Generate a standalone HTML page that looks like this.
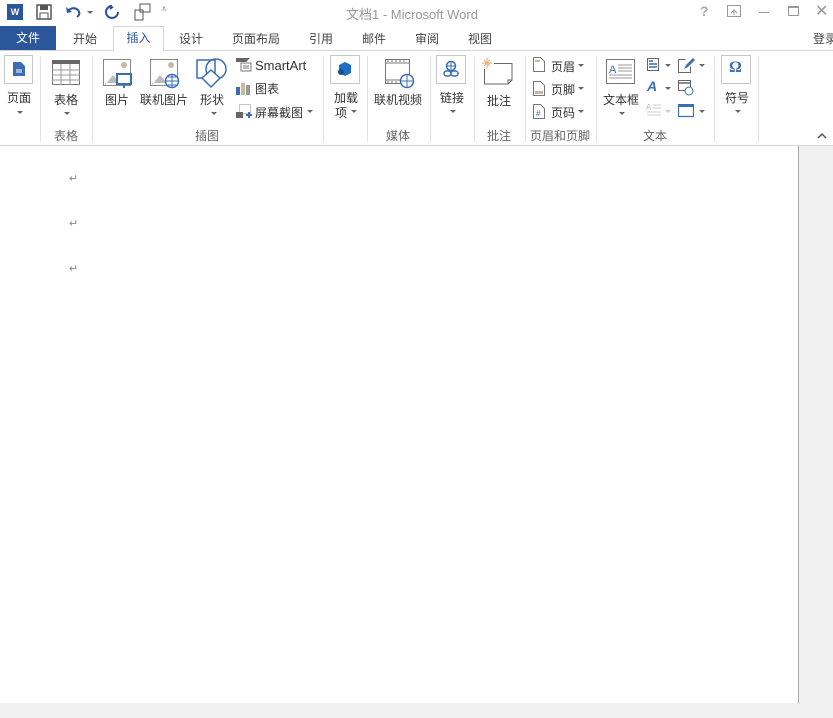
<!DOCTYPE html>
<html><head><meta charset="utf-8"><style>
*{margin:0;padding:0;box-sizing:border-box}
body{width:833px;height:718px;overflow:hidden;background:#fff;font-family:"Liberation Sans","Noto Sans CJK SC",sans-serif;font-size:12px;color:#444;position:relative}
.a{position:absolute;white-space:nowrap}
.tab{position:absolute;top:30px;font-size:12px;color:#444;white-space:nowrap}
.sep{position:absolute;top:56px;width:1px;height:86px;background:#e1e1e1}
.grp{position:absolute;top:127px;font-size:12px;color:#666;white-space:nowrap}
.lbl{position:absolute;font-size:12px;color:#333;white-space:nowrap}
.dd{position:absolute;width:0;height:0;border-left:3px solid transparent;border-right:3px solid transparent;border-top:3px solid #666}
.box{position:absolute;border:1px solid #c6c6c6;background:#fff}
.pm{position:absolute;font-size:11px;color:#888}
</style></head><body>
<div class="a" style="left:7px;top:4px;width:16px;height:16px;background:#2b579a;color:#fff;font-size:9px;font-weight:bold;line-height:16px;text-align:center">W</div>
<svg class="a" style="left:36px;top:4px" width="16" height="16"><rect x="1" y="1" width="14" height="14" fill="none" stroke="#555" stroke-width="1.5"/><rect x="4" y="1" width="8" height="5" fill="#555"/><rect x="4" y="9" width="8" height="6" fill="none" stroke="#555"/></svg>
<svg class="a" style="left:64px;top:4px" width="30" height="16"><path d="M4 7 Q9 2 14 6 Q17 10 13 13" fill="none" stroke="#2b579a" stroke-width="2"/><path d="M2 3 L3 9 L8 8Z" fill="#2b579a"/><path d="M23 7l3 3 3-3z" fill="#666"/></svg>
<svg class="a" style="left:104px;top:4px" width="16" height="16"><path d="M8 2 A6 6 0 1 0 14 8" fill="none" stroke="#2b579a" stroke-width="2"/><path d="M5 1 L10 3 L6 6Z" fill="#2b579a"/></svg>
<svg class="a" style="left:133px;top:3px" width="20" height="18"><rect x="7" y="1" width="10" height="8" fill="none" stroke="#555"/><rect x="2" y="7" width="8" height="10" fill="none" stroke="#555"/></svg>
<div class="a" style="left:161px;top:4px;color:#666;font-size:10px">⩡</div>
<div class="a" style="left:346px;top:4px;color:#999;font-size:13px">文档1 - Microsoft Word</div>
<div class="a" style="left:700px;top:3px;color:#aaa;font-size:14px;font-weight:bold">?</div>
<svg class="a" style="left:727px;top:5px" width="14" height="12"><rect x="0.5" y="0.5" width="13" height="11" fill="none" stroke="#999"/><path d="M4 8l3-3 3 3M7 5v5" stroke="#999" fill="none"/></svg>
<div class="a" style="left:759px;top:12px;width:10px;height:1px;background:#999"></div>
<div class="a" style="left:788px;top:6px;width:11px;height:10px;border:1px solid #999;border-top-width:2px"></div>
<div class="a" style="left:815px;top:1px;color:#999;font-size:16px">✕</div>
<div class="a" style="left:0;top:26px;width:56px;height:24px;background:#2b579a;color:#fff;text-align:center;line-height:24px">文件</div>
<div class="tab" style="left:73px">开始</div>
<div class="a" style="left:113px;top:26px;width:51px;height:25px;border:1px solid #d5d5d5;border-bottom:none;background:#fff;color:#2b579a;text-align:center;line-height:23px">插入</div>
<div class="tab" style="left:179px">设计</div>
<div class="tab" style="left:232px">页面布局</div>
<div class="tab" style="left:309px">引用</div>
<div class="tab" style="left:362px">邮件</div>
<div class="tab" style="left:415px">审阅</div>
<div class="tab" style="left:468px">视图</div>
<div class="tab" style="left:813px">登录</div>
<div class="a" style="left:0;top:50px;width:113px;height:1px;background:#d5d5d5"></div>
<div class="a" style="left:164px;top:50px;width:669px;height:1px;background:#d5d5d5"></div>
<div class="box" style="left:4px;top:55px;width:29px;height:29px"></div>
<svg class="a" style="left:12px;top:61px" width="14" height="16"><path d="M1 1h8l4 4v10H1z" fill="#3a6fb4"/><path d="M4 9h6M4 11h6" stroke="#fff"/></svg>
<div class="lbl" style="left:7px;top:89px">页面</div><div class="dd" style="left:17px;top:111px"></div>
<div class="sep" style="left:40px"></div>
<svg class="a" style="left:52px;top:60px" width="28" height="26"><rect x="0.5" y="0.5" width="27" height="24" fill="#fff" stroke="#777"/><rect x="0" y="0" width="28" height="4" fill="#666"/><path d="M0 10h28M0 15h28M0 20h28M9 4v21M18 4v21" stroke="#999"/></svg>
<div class="lbl" style="left:54px;top:91px">表格</div><div class="dd" style="left:64px;top:112px"></div>
<div class="grp" style="left:54px">表格</div>
<div class="sep" style="left:92px"></div>
<svg class="a" style="left:103px;top:59px" width="30" height="30"><rect x="0.5" y="0.5" width="27" height="26" fill="#fff" stroke="#888"/><circle cx="21" cy="6" r="3" fill="#c9b89e"/><path d="M2 26l8-10 7 8H2z" fill="#bbb"/><rect x="14" y="15" width="14" height="10" fill="#fff" stroke="#3a6fb4" stroke-width="2"/><path d="M21 25v4" stroke="#3a6fb4" stroke-width="2"/></svg>
<div class="lbl" style="left:105px;top:91px">图片</div>
<svg class="a" style="left:150px;top:59px" width="30" height="30"><rect x="0.5" y="0.5" width="27" height="26" fill="#fff" stroke="#888"/><circle cx="21" cy="6" r="3" fill="#c9b89e"/><path d="M2 26l8-10 7 8H2z" fill="#bbb"/><circle cx="22" cy="22" r="6.5" fill="#fff" stroke="#3a6fb4" stroke-width="1.5"/><path d="M15.5 22h13M22 15.5v13M18 18h8M18 26h8" stroke="#3a6fb4"/></svg>
<div class="lbl" style="left:140px;top:91px">联机图片</div>
<svg class="a" style="left:196px;top:57px" width="32" height="32"><rect x="1" y="3" width="18" height="18" fill="none" stroke="#3a6fb4" stroke-width="1.5"/><circle cx="20" cy="12" r="10" fill="none" stroke="#3a6fb4" stroke-width="1.5"/><path d="M15 13l9 8-9 9-9-9z" fill="#fff" stroke="#3a6fb4" stroke-width="1.5"/></svg>
<div class="lbl" style="left:200px;top:91px">形状</div><div class="dd" style="left:211px;top:112px"></div>
<svg class="a" style="left:236px;top:58px" width="16" height="14"><path d="M0 0h14l-4 4H0z" fill="#666"/><rect x="5" y="5" width="10" height="8" fill="#fff" stroke="#777"/><path d="M7 8h6M7 10h6" stroke="#777"/></svg>
<div class="lbl" style="left:255px;top:58px;font-size:13px">SmartArt</div>
<svg class="a" style="left:236px;top:81px" width="16" height="14"><rect x="0" y="6" width="4" height="8" fill="#3a6fb4"/><rect x="5" y="2" width="4" height="12" fill="#c9b89e"/><rect x="10" y="4" width="4" height="10" fill="#999"/></svg>
<div class="lbl" style="left:255px;top:80px">图表</div>
<svg class="a" style="left:236px;top:103px" width="16" height="16"><rect x="3.5" y="1.5" width="11" height="9" fill="none" stroke="#888" stroke-dasharray="1 1"/><rect x="0" y="9" width="7" height="6" fill="#666"/><path d="M10 12h6M13 9v6" stroke="#3a6fb4" stroke-width="2"/></svg>
<div class="lbl" style="left:255px;top:104px">屏幕截图</div><div class="dd" style="left:307px;top:110px"></div>
<div class="grp" style="left:195px">插图</div>
<div class="sep" style="left:323px"></div>
<div class="box" style="left:330px;top:55px;width:30px;height:29px"></div>
<svg class="a" style="left:337px;top:61px" width="16" height="16"><path d="M8 1l6 3v8l-6 3-6-3V4z" fill="#1f6fc6"/><circle cx="4" cy="11" r="3" fill="#1f4e8c"/></svg>
<div class="lbl" style="left:334px;top:89px">加载</div>
<div class="lbl" style="left:335px;top:104px">项</div><div class="dd" style="left:351px;top:110px"></div>
<div class="sep" style="left:367px"></div>
<svg class="a" style="left:385px;top:59px" width="30" height="30"><rect x="0.5" y="0.5" width="24" height="24" fill="#fff" stroke="#777"/><path d="M0 4h25M0 21h25" stroke="#777"/><path d="M2 2h2M6 2h2M10 2h2M14 2h2M18 2h2M2 23h2M6 23h2M10 23h2" stroke="#777"/><circle cx="22" cy="22" r="6.5" fill="#fff" stroke="#3a6fb4" stroke-width="1.5"/><path d="M15.5 22h13M22 15.5v13" stroke="#3a6fb4"/></svg>
<div class="lbl" style="left:374px;top:91px">联机视频</div>
<div class="grp" style="left:386px">媒体</div>
<div class="sep" style="left:430px"></div>
<div class="box" style="left:436px;top:55px;width:30px;height:29px"></div>
<svg class="a" style="left:443px;top:60px" width="16" height="18"><circle cx="8" cy="6" r="4.5" fill="none" stroke="#3a6fb4" stroke-width="1.5"/><path d="M3.5 6h9M8 1.5v9" stroke="#3a6fb4"/><rect x="1" y="11" width="7" height="5" rx="2.5" fill="none" stroke="#3a6fb4" stroke-width="1.5"/><rect x="8" y="11" width="7" height="5" rx="2.5" fill="none" stroke="#3a6fb4" stroke-width="1.5"/></svg>
<div class="lbl" style="left:440px;top:89px">链接</div><div class="dd" style="left:450px;top:110px"></div>
<div class="sep" style="left:474px"></div>
<svg class="a" style="left:482px;top:57px" width="32" height="28"><path d="M2 3l6 6M8 3l-6 6M5 1v10M0 6h10" stroke="#e4b87a" stroke-width="1.2"/><path d="M12 6.5H30V23l-4 4H2.5V12" fill="none" stroke="#666"/><path d="M26 27v-4h4" fill="none" stroke="#666"/></svg>
<div class="lbl" style="left:487px;top:92px">批注</div>
<div class="grp" style="left:487px">批注</div>
<div class="sep" style="left:525px"></div>
<svg class="a" style="left:533px;top:57px" width="12" height="15"><path d="M.5.5h7l4 4v10H.5z" fill="#fff" stroke="#777"/><rect x="2" y="3" width="5" height="2" fill="#c9b89e"/></svg>
<div class="lbl" style="left:551px;top:58px">页眉</div><div class="dd" style="left:578px;top:64px"></div>
<svg class="a" style="left:533px;top:81px" width="12" height="15"><path d="M.5.5h7l4 4v10H.5z" fill="#fff" stroke="#777"/><rect x="2" y="10" width="8" height="3" fill="#c9b89e"/></svg>
<div class="lbl" style="left:551px;top:81px">页脚</div><div class="dd" style="left:578px;top:87px"></div>
<svg class="a" style="left:533px;top:104px" width="12" height="15"><path d="M.5.5h7l4 4v10H.5z" fill="#fff" stroke="#777"/><text x="3" y="12" font-size="8" fill="#3a6fb4" font-family="Liberation Sans">#</text></svg>
<div class="lbl" style="left:551px;top:104px">页码</div><div class="dd" style="left:578px;top:110px"></div>
<div class="grp" style="left:530px">页眉和页脚</div>
<div class="sep" style="left:596px"></div>
<svg class="a" style="left:606px;top:59px" width="30" height="26"><rect x="0.5" y="0.5" width="28" height="24" fill="#fff" stroke="#777"/><text x="3" y="14" font-size="11" fill="#3a6fb4" font-family="Liberation Sans">A</text><path d="M12 6h14M12 9h14M12 12h14M3 16h23M3 19h23" stroke="#999"/></svg>
<div class="lbl" style="left:603px;top:91px">文本框</div><div class="dd" style="left:619px;top:112px"></div>
<svg class="a" style="left:647px;top:58px" width="12" height="13"><rect x=".5" y=".5" width="11" height="12" fill="#fff" stroke="#666"/><path d="M2 3h4M2 6h8M2 9h8" stroke="#3a6fb4" stroke-width="1.5"/></svg><div class="dd" style="left:665px;top:64px"></div>
<div class="a" style="left:647px;top:78px;color:#3a6fb4;font-size:14px;font-weight:bold;font-style:italic">A</div><div class="dd" style="left:665px;top:87px"></div>
<svg class="a" style="left:646px;top:102px" width="16" height="16"><text x="0" y="8" font-size="8" fill="#bbb" font-family="Liberation Sans">A</text><path d="M7 3h8M7 6h8M1 10h14M1 13h14" stroke="#ccc"/></svg><div class="dd" style="left:665px;top:110px;border-top-color:#ccc"></div>
<svg class="a" style="left:678px;top:57px" width="18" height="16"><path d="M.5 2.5h7M.5 2.5v13h12v-6" fill="none" stroke="#666"/><path d="M6 12l2-4 7-7 2 2-7 7z" fill="#3a6fb4"/></svg><div class="dd" style="left:699px;top:64px"></div>
<svg class="a" style="left:678px;top:80px" width="16" height="16"><rect x=".5" y=".5" width="12" height="10" fill="none" stroke="#666"/><path d="M0 3h13" stroke="#666" stroke-width="1.5"/><circle cx="11" cy="11" r="4" fill="#fff" stroke="#3a6fb4"/></svg>
<svg class="a" style="left:678px;top:104px" width="16" height="14"><rect x=".5" y=".5" width="15" height="12" fill="#fff" stroke="#3a6fb4" stroke-width="1.2"/><rect x="0" y="0" width="16" height="3" fill="#3a6fb4"/></svg><div class="dd" style="left:699px;top:110px"></div>
<div class="grp" style="left:643px">文本</div>
<div class="sep" style="left:714px"></div>
<div class="box" style="left:721px;top:55px;width:30px;height:29px"></div>
<div class="a" style="left:729px;top:59px;color:#3a6fb4;font-size:16px;font-weight:bold;font-family:'Liberation Serif',serif">Ω</div>
<div class="lbl" style="left:725px;top:89px">符号</div><div class="dd" style="left:735px;top:110px"></div>
<div class="sep" style="left:758px"></div>
<svg class="a" style="left:817px;top:132px" width="10" height="8"><path d="M1 6l4-4 4 4" fill="none" stroke="#555" stroke-width="1.5"/></svg>
<div class="a" style="left:0;top:145px;width:833px;height:1px;background:#d5d5d5"></div>
<div class="a" style="left:798px;top:146px;width:1px;height:557px;background:#aaa"></div>
<div class="a" style="left:799px;top:146px;width:34px;height:572px;background:#f1f1f1"></div>
<div class="a" style="left:0;top:703px;width:833px;height:15px;background:#f0f0f0"></div>
<div class="pm" style="left:69px;top:172px">↵</div>
<div class="pm" style="left:69px;top:217px">↵</div>
<div class="pm" style="left:69px;top:262px">↵</div>
</body></html>
